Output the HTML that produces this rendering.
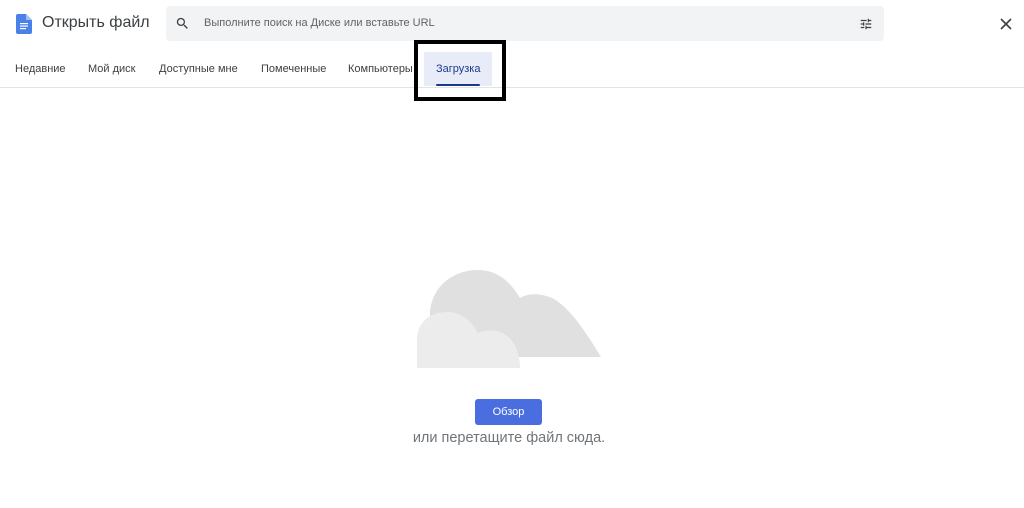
<!DOCTYPE html>
<html><head><meta charset="utf-8"><style>
body{margin:0;width:1024px;height:508px;background:#fff;font-family:"Liberation Sans",Arial,sans-serif;position:relative;overflow:hidden}
.a{position:absolute}
.tab{position:absolute;top:63px;font-size:11px;color:#3c4043}
</style></head><body>
<svg class="a" style="left:16px;top:14px" width="16" height="20" viewBox="0 0 16 20"><path d="M2 0h8l6 6v12a2 2 0 0 1-2 2H2a2 2 0 0 1-2-2V2a2 2 0 0 1 2-2z" fill="#4a80e8"/><path d="M10 0v6h6z" fill="#a0c0f5"/><rect x="4" y="9" width="8" height="1.2" fill="#fff"/><rect x="4" y="11.5" width="8" height="1.2" fill="#fff"/><rect x="4" y="14" width="6" height="1.2" fill="#fff"/></svg>
<div class="a" style="left:42px;top:14px;font-size:16px;color:#3c4043">Открыть файл</div>
<div class="a" style="left:166px;top:6px;width:718px;height:35px;background:#f1f3f4;border-radius:4px"></div>
<svg class="a" style="left:175px;top:16px" width="15" height="15" viewBox="0 0 24 24"><path d="M15.5 14h-.8l-.3-.3A6.5 6.5 0 1 0 9.5 16a6.5 6.5 0 0 0 4.2-1.6l.3.3v.8l5 5 1.5-1.5-5-5zm-6 0A4.5 4.5 0 1 1 14 9.5 4.5 4.5 0 0 1 9.5 14z" fill="#3c4043"/></svg>
<div class="a" style="left:204px;top:17px;font-size:11px;color:#5f6368">Выполните поиск на Диске или вставьте URL</div>
<svg class="a" style="left:859px;top:17px" width="14" height="14" viewBox="0 0 24 24"><path d="M3 17v2h6v-2H3zM3 5v2h10V5H3zm10 16v-2h8v-2h-8v-2h-2v6h2zM7 9v2H3v2h4v2h2V9H7zm14 4v-2H11v2h10zm-6-4h2V7h4V5h-4V3h-2v6z" fill="#3c4043"/></svg>
<svg class="a" style="left:1000px;top:18px" width="12" height="12" viewBox="0 0 12 12"><path d="M1 1L11 11M11 1L1 11" stroke="#3c4043" stroke-width="1.6"/></svg>
<div class="tab" style="left:15px">Недавние</div>
<div class="tab" style="left:88px">Мой диск</div>
<div class="tab" style="left:159px">Доступные мне</div>
<div class="tab" style="left:261px">Помеченные</div>
<div class="tab" style="left:348px">Компьютеры</div>
<div class="a" style="left:424px;top:52px;width:68px;height:34px;background:#e8ecf8"></div>
<div class="tab" style="left:436px;color:#1a3a8a">Загрузка</div>
<div class="a" style="left:436px;top:84px;width:44px;height:2px;background:#1a3a8a;border-radius:1px"></div>
<div class="a" style="left:0;top:87px;width:1024px;height:1px;background:#e3e3e3"></div>
<div class="a" style="left:414px;top:40px;width:84px;height:53px;border:4px solid #000"></div>
<svg class="a" style="left:0;top:0" width="1024" height="508">
<path d="M430 357 L430 315 C430 290 450 270 478 270 C500 270 512 285 520 298 C528 293 540 293 552 298 C568 306 585 330 601 357 Z" fill="#e0e0e1"/>
<path d="M417 368 L417 340 C417 322 430 312 447 312 C462 312 472 322 478 333 C485 330 492 330 500 332 C512 336 520 350 520 368 Z" fill="#ececec"/>
</svg>
<div class="a" style="left:475px;top:399px;width:67px;height:26px;background:#4a6ee0;border-radius:3px;color:#fff;font-size:11px;text-align:center;line-height:26px">Обзор</div>
<div class="a" style="left:0;width:1018px;top:430px;text-align:center;font-size:14.5px;color:#70757a">или перетащите файл сюда.</div>
</body></html>
